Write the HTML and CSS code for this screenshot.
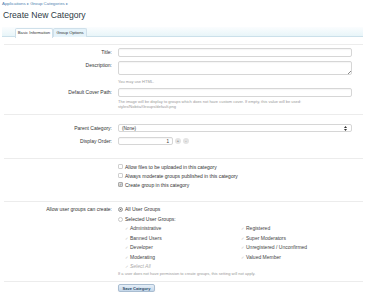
FILE: index.html
```html
<!DOCTYPE html>
<html lang="en">
<head>
<meta charset="UTF-8">
<title>Create New Category</title>
<link rel="stylesheet" href="styles.css">
</head>
<body>
<div class="page">
  <div class="crumbs"><a href="#">Applications</a> &#9656; <a href="#">Group Categories</a> &#9656;</div>
  <h1>Create New Category</h1>
  <ul class="tabs">
    <li class="active">Basic Information</li>
    <li>Group Options</li>
  </ul>

  <form>
    <fieldset class="sec sec-info">
      <div class="row">
        <label class="lbl">Title:</label>
        <div class="ctl"><input class="txt" type="text"></div>
      </div>
      <div class="row row-desc">
        <label class="lbl">Description:</label>
        <div class="ctl">
          <span class="area"><textarea class="txt"></textarea><i class="grip"></i></span>
          <p class="hint">You may use HTML.</p>
        </div>
      </div>
      <div class="row row-cover">
        <label class="lbl">Default Cover Path:</label>
        <div class="ctl">
          <input class="txt" type="text">
          <p class="hint explain">The image will be display to groups which does not have custom cover. If empty, this value will be used:<br>styles/Nobita/Groups/default.png</p>
        </div>
      </div>
    </fieldset>

    <fieldset class="sec sec-parent">
      <div class="row">
        <label class="lbl">Parent Category:</label>
        <div class="ctl">
          <div class="select">(None)
            <svg class="arrows" width="3" height="5" viewBox="0 0 3 5"><path d="M1.5 0 3 2H0zM1.5 5 3 3H0z" fill="#333"/></svg>
          </div>
        </div>
      </div>
      <div class="row row-order">
        <label class="lbl">Display Order:</label>
        <div class="ctl spin">
          <div class="txt num">1</div>
          <span class="spin-btn">+</span>
          <span class="spin-btn">-</span>
        </div>
      </div>
    </fieldset>

    <fieldset class="sec sec-checks">
      <div class="row">
        <span class="lbl"></span>
        <ul class="ctl checks">
          <li><span class="box"></span>Allow files to be uploaded in this category</li>
          <li><span class="box"></span>Always moderate groups published in this category</li>
          <li><span class="box on">&#10003;</span>Create group in this category</li>
        </ul>
      </div>
    </fieldset>

    <fieldset class="sec sec-groups">
      <div class="row">
        <label class="lbl top">Allow user groups can create:</label>
        <div class="ctl">
          <div class="radio-row"><span class="radio on"></span>All User Groups</div>
          <div class="radio-row"><span class="radio"></span>Selected User Groups:</div>
          <ul class="groups">
            <li><span class="tick">&#10003;</span>Administrative</li>
            <li><span class="tick">&#10003;</span>Registered</li>
            <li><span class="tick">&#10003;</span>Banned Users</li>
            <li><span class="tick">&#10003;</span>Super Moderators</li>
            <li><span class="tick">&#10003;</span>Developer</li>
            <li><span class="tick">&#10003;</span>Unregistered / Unconfirmed</li>
            <li><span class="tick">&#10003;</span>Moderating</li>
            <li><span class="tick">&#10003;</span>Valued Member</li>
          </ul>
          <div class="select-all"><span class="tick">&#10003;</span>Select All</div>
          <p class="hint">If a user does not have permission to create groups, this setting will not apply.</p>
        </div>
      </div>
    </fieldset>

    <div class="sec submit">
      <div class="row">
        <span class="lbl"></span>
        <div class="ctl"><button type="button" class="btn">Save Category</button></div>
      </div>
    </div>
  </form>
</div>
</body>
</html>
```

FILE: styles.css
```css
* { box-sizing: border-box; }
body { margin: 0; background: #fff; font-family: 'Liberation Sans', Arial, sans-serif; font-size: 5px; color: #333; }
.page { padding: 0 6px 0 2px; }

.crumbs { height: 7px; line-height: 7px; font-size: 4.4px; color: #6a93bd; }
.crumbs a { color: #4f7fb0; text-decoration: none; }
h1 { margin: 2px 0 0 1px; height: 13px; line-height: 13px; font-size: 8.6px; font-weight: normal; color: #2d3a45; }

.tabs { display: flex; list-style: none; margin: 5px 0 0; padding: 1px 0 0 13px; height: 10px; background: linear-gradient(#fbfdfe, #e8f5f9); border-bottom: 1px solid #cbe0ea; }
.tabs li { height: 9px; line-height: 8px; padding: 0; white-space: nowrap; text-align: center; font-size: 4.2px; color: #333; border: 1px solid #cfe0ea; border-bottom: none; border-radius: 2px 2px 0 0; background: #e5f3fa; }
.tabs li.active { width: 38px; background: #fff; margin-bottom: -1px; height: 10px; }
.tabs li + li { width: 34px; }

form { margin: 7px 0 0 2px; }
.sec { margin: 0; padding: 0; border: none; border-top: 1px solid #ececec; min-width: 0; }
.row { display: grid; grid-template-columns: 108px 234px; column-gap: 6px; align-items: start; }
.lbl { text-align: right; color: #333; line-height: 9px; }
.lbl.top { line-height: 10px; }
.ctl { margin: 0; padding: 0; min-width: 0; }

.txt { display: block; width: 100%; height: 9px; margin: 0; padding: 0 2px; border: 1px solid #d6d6d6; border-radius: 2px; background: #fff; box-shadow: inset 0 1px 1px rgba(0,0,0,0.04); font: inherit; }
.hint { margin: 0; font-size: 4px; line-height: 5px; color: #9a9a9a; }

.sec-info { padding: 3px 0 5px; }
.row-desc { margin-top: 4px; }
.area { display: block; position: relative; }
.area textarea { height: 14px; resize: none; }
.grip { position: absolute; right: 1px; bottom: 1px; width: 3px; height: 3px; background: linear-gradient(135deg, transparent 45%, #888 45%, #888 55%, transparent 55%); }
.row-desc .hint { margin-top: 4px; }
.row-cover { margin-top: 4px; }
.explain { margin-top: 2px; }

.sec-parent { padding: 9px 0 13px; }
.sec-parent .lbl { line-height: 8px; }
.select { position: relative; height: 8px; line-height: 7px; padding: 0 3px; border: 1px solid #d6d6d6; border-radius: 2px; background: #fff; font-size: 4.6px; }
.arrows { position: absolute; right: 4px; top: 1px; }
.row-order { margin-top: 5px; }
.spin { display: flex; align-items: center; gap: 2px; }
.num { width: 55px; height: 8px; line-height: 7px; text-align: right; padding-right: 3px; font-size: 4.6px; }
.spin-btn { width: 6px; height: 6px; border-radius: 50%; background: #e4e4e4; color: #555; font-size: 4px; line-height: 6px; text-align: center; }

.sec-checks { padding: 3px 0 12px; }
.checks { list-style: none; }
.checks li { display: flex; align-items: center; height: 9px; }
.box { width: 5px; height: 5px; margin-right: 2px; border: 1px solid #cfcfcf; border-radius: 1px; background: #fff; font-size: 4px; line-height: 3px; text-align: center; color: #666; }
.box.on { background: #ddd; border-color: #aaa; }

.sec-groups { padding: 2px 0 5px; }
.radio-row { display: flex; align-items: center; height: 10px; }
.radio { width: 5px; height: 5px; margin-right: 2px; border: 1px solid #c8c8c8; border-radius: 50%; background: #fff; }
.radio.on { background: radial-gradient(#666 35%, #ddd 45%); border-color: #999; }
.groups { display: grid; grid-template-columns: 116px 116px; list-style: none; margin: 0; padding: 0 0 0 7px; }
.groups li { height: 9.6px; line-height: 9.6px; color: #444; }
.tick { display: inline-block; width: 5px; color: #bbb; font-size: 3.6px; }
.select-all { padding-left: 7px; height: 8px; line-height: 8px; color: #aaa; font-style: italic; }
.sec-groups .hint { margin-top: 1px; }

.submit { padding-top: 2px; }
.btn { display: block; width: 37px; height: 8px; padding: 0; border: 1px solid #a9bdd1; border-radius: 2px; background: linear-gradient(#e6eff8, #c5d7e9); box-shadow: 0 1px 1px rgba(0,0,0,0.12); font: bold 4px 'Liberation Sans', Arial, sans-serif; color: #2c4a68; }
```
